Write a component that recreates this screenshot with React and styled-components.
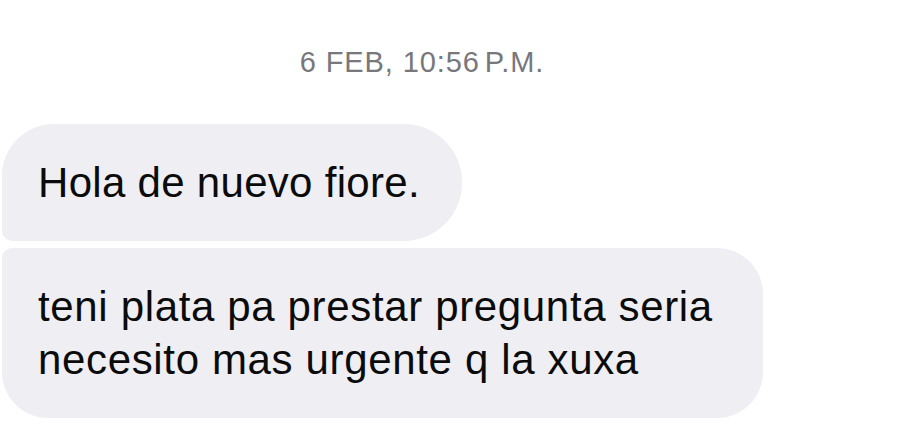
import React from 'react'
import styled, { createGlobalStyle } from 'styled-components'

const GlobalStyle = createGlobalStyle`
  body {
    margin: 0;
    background: #fff;
    font-family: "Liberation Sans", Arial, sans-serif;
  }
`

const Thread = styled.div`
  width: 903px;
  height: 445px;
  overflow: hidden;
  background: #fff;
  display: flex;
  flex-direction: column;
  align-items: flex-start;
`

const Timestamp = styled.div`
  width: 844px;
  padding-top: 46px;
  margin-bottom: 45px;
  text-align: center;
  font-size: 29px;
  line-height: 33px;
  color: #77777c;
  letter-spacing: 0.9px;
`

const Meridiem = styled.span`
  margin-left: -4px;
`

const Bubbles = styled.div`
  display: flex;
  flex-direction: column;
  align-items: flex-start;
  gap: 7px;
  margin-left: 2px;
`

const Bubble = styled.div`
  background: #eeeef3;
  color: #0b0b0b;
  font-size: 42px;
  line-height: 53px;
  padding: 32px ${(p) => p.$padRight || '42px'} 32px 36px;
  border-radius: ${(p) => p.$radius};
  letter-spacing: ${(p) => p.$tracking || '0.3px'};
`

function App() {
  return (
    <>
      <GlobalStyle />
      <Thread>
        <Timestamp>
          6 FEB, 10:56 <Meridiem>P.M.</Meridiem>
        </Timestamp>
        <Bubbles>
          <Bubble $radius="52px 58px 58px 10px">Hola de nuevo fiore.</Bubble>
          <Bubble $radius="10px 46px 46px 46px" $padRight="50px" $tracking="0.65px">
            teni plata pa prestar pregunta seria
            <br />
            necesito mas urgente q la xuxa
          </Bubble>
        </Bubbles>
      </Thread>
    </>
  )
}

export default App
